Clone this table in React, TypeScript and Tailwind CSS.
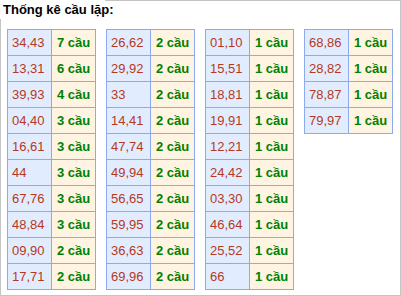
import React from "react";

const tables: [string, number][][] = [
  [
    ["34,43", 7], ["13,31", 6], ["39,93", 4], ["04,40", 3], ["16,61", 3],
    ["44", 3], ["67,76", 3], ["48,84", 3], ["09,90", 2], ["17,71", 2],
  ],
  [
    ["26,62", 2], ["29,92", 2], ["33", 2], ["14,41", 2], ["47,74", 2],
    ["49,94", 2], ["56,65", 2], ["59,95", 2], ["36,63", 2], ["69,96", 2],
  ],
  [
    ["01,10", 1], ["15,51", 1], ["18,81", 1], ["19,91", 1], ["12,21", 1],
    ["24,42", 1], ["03,30", 1], ["46,64", 1], ["25,52", 1], ["66", 1],
  ],
  [["68,86", 1], ["28,82", 1], ["78,87", 1], ["79,97", 1]],
];

export default function App() {
  return (
    <div
      className="w-[401px] h-[296px] border border-[#c4c4c4] bg-white relative"
      style={{ fontFamily: '"Liberation Sans", Arial, sans-serif' }}
    >
      <div className="-mt-px -ml-px w-[105px] h-[19px] bg-white pl-[3px] pt-[2px] text-[13px] leading-[16px] font-bold text-black whitespace-nowrap">
        Thống kê cầu lặp:
      </div>
      <div className="flex items-start gap-[10px] mt-[10px] ml-[6px]">
        {tables.map((rows, ti) => (
          <div key={ti} className="w-[89px] border-r border-b border-[#8eaaee]">
            {rows.map(([pair, n], ri) => (
              <div key={ri} className="flex h-[26px]">
                <div className="w-[44px] border-t border-l border-[#8eaaee] bg-[#e1edff] pl-[4px] text-[13px] leading-[25px] text-[#b5391e]">
                  {pair}
                </div>
                <div className="w-[44px] border-t border-l border-[#8eaaee] bg-[#fff4e1] pl-[5px] text-[13px] leading-[25px] font-bold text-[#008000] whitespace-nowrap">
                  {n} cầu
                </div>
              </div>
            ))}
          </div>
        ))}
      </div>
    </div>
  );
}
